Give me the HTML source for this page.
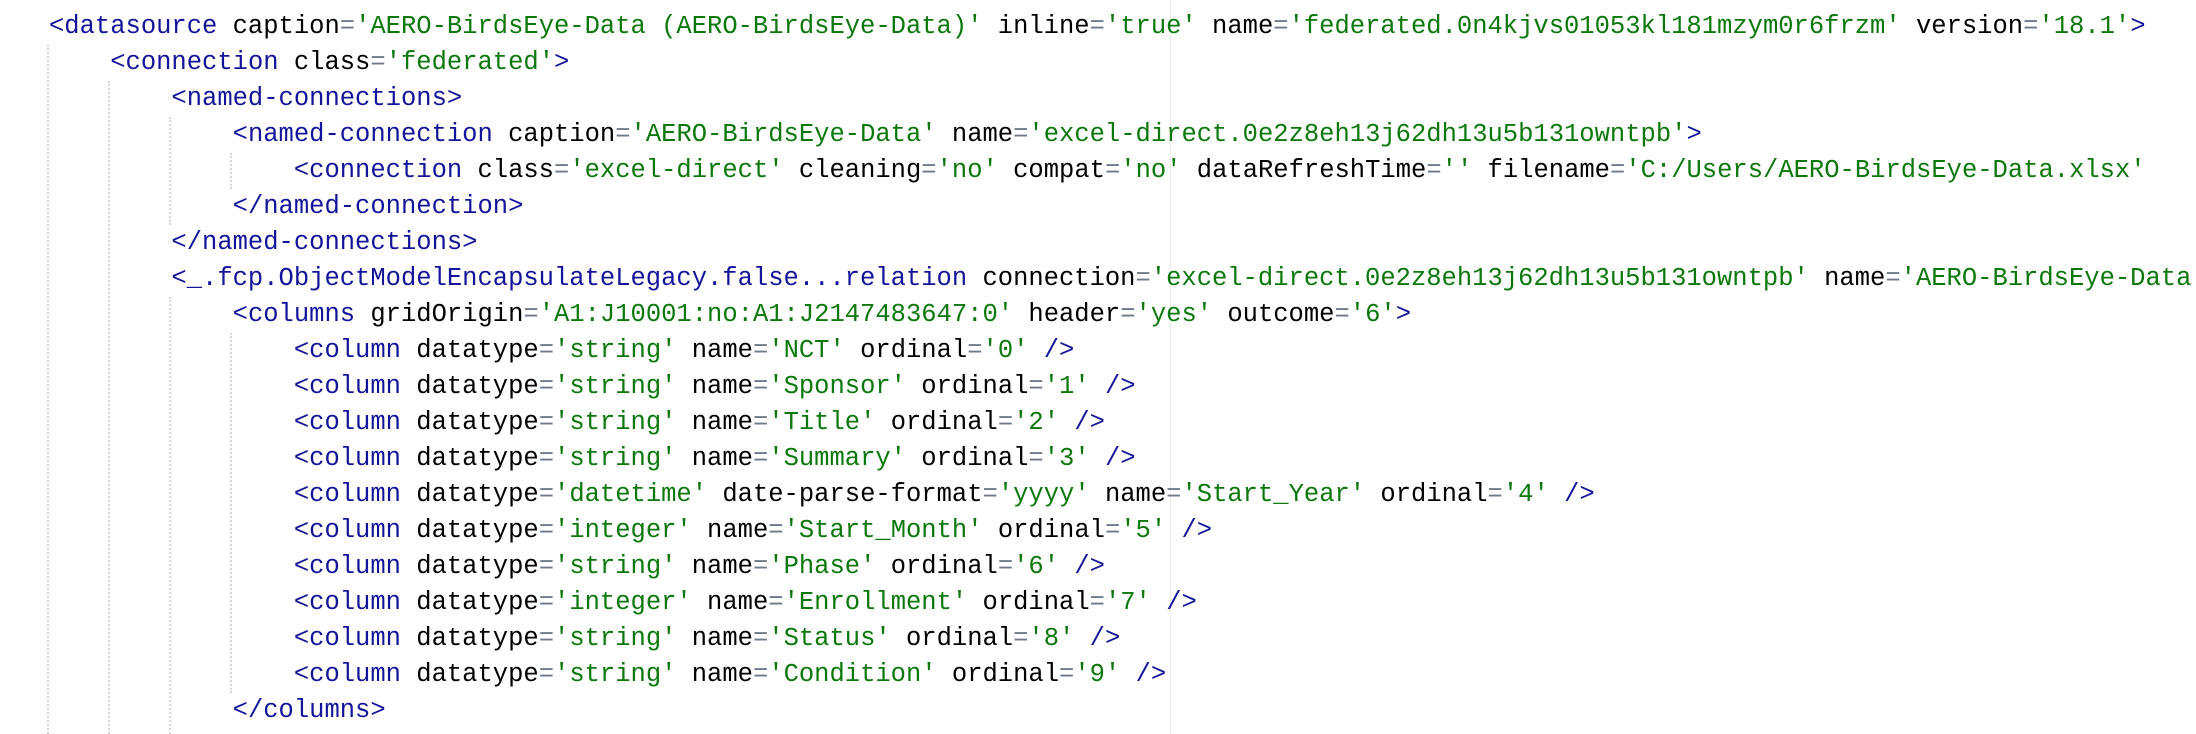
<!DOCTYPE html>
<html><head><meta charset="utf-8"><style>
html,body{margin:0;padding:0;background:#fff;width:2196px;height:734px;overflow:hidden;position:relative}
.l{position:absolute;left:49px;height:36px;line-height:36px;font-family:"Liberation Mono",monospace;font-size:25.5px;white-space:pre;color:#000}
.t{color:#14149a}.v{color:#0b780b}.e{color:#6f7a88}
.g{position:absolute;width:0;border-left:2px dotted #d6d6d6}
.m{position:absolute;left:1170px;top:0;width:1px;height:734px;background:#ececec}
</style></head><body>
<div class="m"></div>
<div class="l" style="top:-27px"><span class="t">  &lt;datasources&gt;</span></div>
<div class="l" style="top:9px"><span class="t">&lt;datasource</span> caption<span class="e">=</span><span class="v">'AERO-BirdsEye-Data (AERO-BirdsEye-Data)'</span> inline<span class="e">=</span><span class="v">'true'</span> name<span class="e">=</span><span class="v">'federated.0n4kjvs01053kl181mzym0r6frzm'</span> version<span class="e">=</span><span class="v">'18.1'</span><span class="t">&gt;</span></div>
<div class="l" style="top:45px">    <span class="t">&lt;connection</span> class<span class="e">=</span><span class="v">'federated'</span><span class="t">&gt;</span></div>
<div class="l" style="top:81px">        <span class="t">&lt;named-connections&gt;</span></div>
<div class="l" style="top:117px">            <span class="t">&lt;named-connection</span> caption<span class="e">=</span><span class="v">'AERO-BirdsEye-Data'</span> name<span class="e">=</span><span class="v">'excel-direct.0e2z8eh13j62dh13u5b131owntpb'</span><span class="t">&gt;</span></div>
<div class="l" style="top:153px">                <span class="t">&lt;connection</span> class<span class="e">=</span><span class="v">'excel-direct'</span> cleaning<span class="e">=</span><span class="v">'no'</span> compat<span class="e">=</span><span class="v">'no'</span> dataRefreshTime<span class="e">=</span><span class="v">''</span> filename<span class="e">=</span><span class="v">'C:/Users/AERO-BirdsEye-Data.xlsx'</span></div>
<div class="l" style="top:189px">            <span class="t">&lt;/named-connection&gt;</span></div>
<div class="l" style="top:225px">        <span class="t">&lt;/named-connections&gt;</span></div>
<div class="l" style="top:261px">        <span class="t">&lt;_.fcp.ObjectModelEncapsulateLegacy.false...relation</span> connection<span class="e">=</span><span class="v">'excel-direct.0e2z8eh13j62dh13u5b131owntpb'</span> name<span class="e">=</span><span class="v">'AERO-BirdsEye-Data'</span></div>
<div class="l" style="top:297px">            <span class="t">&lt;columns</span> gridOrigin<span class="e">=</span><span class="v">'A1:J10001:no:A1:J2147483647:0'</span> header<span class="e">=</span><span class="v">'yes'</span> outcome<span class="e">=</span><span class="v">'6'</span><span class="t">&gt;</span></div>
<div class="l" style="top:333px">                <span class="t">&lt;column</span> datatype<span class="e">=</span><span class="v">'string'</span> name<span class="e">=</span><span class="v">'NCT'</span> ordinal<span class="e">=</span><span class="v">'0'</span> <span class="t">/&gt;</span></div>
<div class="l" style="top:369px">                <span class="t">&lt;column</span> datatype<span class="e">=</span><span class="v">'string'</span> name<span class="e">=</span><span class="v">'Sponsor'</span> ordinal<span class="e">=</span><span class="v">'1'</span> <span class="t">/&gt;</span></div>
<div class="l" style="top:405px">                <span class="t">&lt;column</span> datatype<span class="e">=</span><span class="v">'string'</span> name<span class="e">=</span><span class="v">'Title'</span> ordinal<span class="e">=</span><span class="v">'2'</span> <span class="t">/&gt;</span></div>
<div class="l" style="top:441px">                <span class="t">&lt;column</span> datatype<span class="e">=</span><span class="v">'string'</span> name<span class="e">=</span><span class="v">'Summary'</span> ordinal<span class="e">=</span><span class="v">'3'</span> <span class="t">/&gt;</span></div>
<div class="l" style="top:477px">                <span class="t">&lt;column</span> datatype<span class="e">=</span><span class="v">'datetime'</span> date-parse-format<span class="e">=</span><span class="v">'yyyy'</span> name<span class="e">=</span><span class="v">'Start_Year'</span> ordinal<span class="e">=</span><span class="v">'4'</span> <span class="t">/&gt;</span></div>
<div class="l" style="top:513px">                <span class="t">&lt;column</span> datatype<span class="e">=</span><span class="v">'integer'</span> name<span class="e">=</span><span class="v">'Start_Month'</span> ordinal<span class="e">=</span><span class="v">'5'</span> <span class="t">/&gt;</span></div>
<div class="l" style="top:549px">                <span class="t">&lt;column</span> datatype<span class="e">=</span><span class="v">'string'</span> name<span class="e">=</span><span class="v">'Phase'</span> ordinal<span class="e">=</span><span class="v">'6'</span> <span class="t">/&gt;</span></div>
<div class="l" style="top:585px">                <span class="t">&lt;column</span> datatype<span class="e">=</span><span class="v">'integer'</span> name<span class="e">=</span><span class="v">'Enrollment'</span> ordinal<span class="e">=</span><span class="v">'7'</span> <span class="t">/&gt;</span></div>
<div class="l" style="top:621px">                <span class="t">&lt;column</span> datatype<span class="e">=</span><span class="v">'string'</span> name<span class="e">=</span><span class="v">'Status'</span> ordinal<span class="e">=</span><span class="v">'8'</span> <span class="t">/&gt;</span></div>
<div class="l" style="top:657px">                <span class="t">&lt;column</span> datatype<span class="e">=</span><span class="v">'string'</span> name<span class="e">=</span><span class="v">'Condition'</span> ordinal<span class="e">=</span><span class="v">'9'</span> <span class="t">/&gt;</span></div>
<div class="l" style="top:693px">            <span class="t">&lt;/columns&gt;</span></div>
<div class="g" style="left:47px;top:45px;height:689px"></div>
<div class="g" style="left:108px;top:81px;height:653px"></div>
<div class="g" style="left:169px;top:117px;height:108px"></div>
<div class="g" style="left:169px;top:297px;height:437px"></div>
<div class="g" style="left:230px;top:153px;height:36px"></div>
<div class="g" style="left:230px;top:333px;height:360px"></div>
</body></html>
